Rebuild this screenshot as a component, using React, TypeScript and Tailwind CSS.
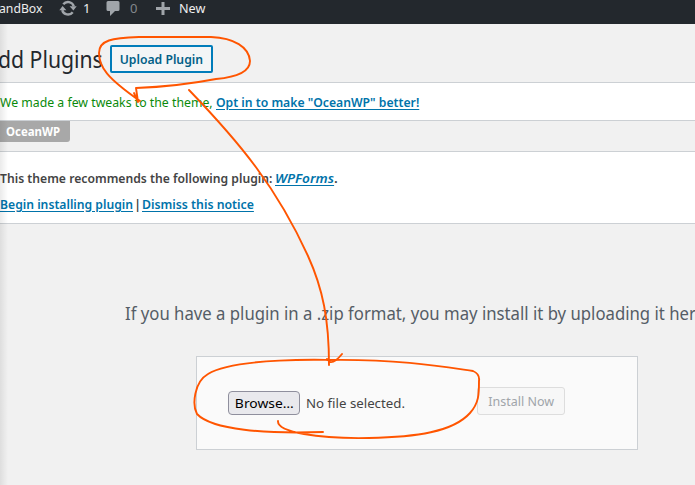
const link = 'font-semibold text-[#0073aa] underline underline-offset-2';
const narrow = 'inline-block origin-left whitespace-nowrap';

function Header() {
  return (
    <header className="flex h-6 items-start bg-[#23282d] text-[13px] leading-[17px] text-[#eeeeee]">
      <span className="w-[59px] origin-left whitespace-nowrap"><span className={narrow + ' -ml-px scale-x-[.94]'}>andBox</span></span>
      <svg className="h-[17px] w-[18px]" viewBox="0 0 18 17" fill="none" stroke="#a0a5aa" strokeWidth="2.4">
        <path d="M4.300 4.300A6 6 0 0 1 14.800 6.300M13.700 12.200A6 6 0 0 1 3.200 10.200" />
        <path d="M17.700 6.200 14.400 10.400 10.600 6.200ZM.3 10.300 3.600 6.100 7.400 10.300Z" fill="#a0a5aa" stroke="none" />
      </svg>
      <span className="ml-[6px] w-[23px]">1</span>
      <svg className="h-[17px] w-[14px]" viewBox="0 0 14 17" fill="#a0a5aa">
        <path d="M2 1h10q1.500 0 1.500 1.500v7Q13.500 11 12 11H9l-5 5v-5H2Q.5 11 .5 9.500v-7Q.5 1 2 1Z" />
      </svg>
      <span className="ml-[10px] w-[26px] text-[#82878c]">0</span>
      <svg className="h-[17px] w-[14px]" viewBox="0 0 14 17" fill="#a0a5aa">
        <path d="M5.500 2h3v5H14v3H8.500v5h-3v-5H0V7h5.500Z" />
      </svg>
      <span className="ml-[9px] origin-left scale-x-[.97]">New</span>
    </header>
  );
}

export default function App() {
  return (
    <div className="relative h-[485px] w-[695px] overflow-hidden bg-[#f1f1f1] font-['Noto_Sans',sans-serif] text-[13px] text-[#444444]">
      <Header />
      <main className="whitespace-nowrap">
        <div className="flex h-[58px] items-start pt-[21px]">
          <h1 className="w-[110px] text-[23px] leading-[28px] text-[#23282d]"><span className={narrow + ' -ml-[2px] scale-x-[.922]'}>dd Plugins</span></h1>
          <button className="h-7 w-[103px] rounded-[2px] border-2 border-[#007cba] bg-[#f3f5f6] text-[13px] leading-6 font-semibold text-[#016087]"><span className="inline-block scale-x-[.938]">Upload Plugin</span></button>
        </div>
        <section className="flex h-[39px] items-center border-y border-[#ccd0d4] bg-white pt-[2px] text-[#0a8a0a]">
          <span className="w-[216px]"><span className={narrow + ' scale-x-[.945]'}>We made a few tweaks to the theme,</span></span>
          <a className={link + ' ' + narrow + ' scale-x-[.938]'}>Opt in to make "OceanWP" better!</a>
        </section>
        <div className="h-[30px]">
          <div className="flex h-[21px] w-[70px] items-center rounded-br-[3px] bg-[#a8a8a8] pl-[6px] text-[12px] font-bold text-white"><span className={narrow + ' scale-x-[.95]'}>OceanWP</span></div>
        </div>
        <section className="h-[73px] border-y border-[#ccd0d4] bg-white pt-4 leading-5 font-semibold">
          <p className="flex">
            <span className="w-[275px]"><span className={narrow + ' scale-x-[.937]'}>This theme recommends the following plugin:</span></span>
            <span className={narrow + ' scale-x-[1.050]'}><a className={link + ' italic'}>WPForms</a>.</span>
          </p>
          <p className="mt-[6px] flex">
            <span className="w-[134px]"><a className={link + ' ' + narrow + ' scale-x-[.937]'}>Begin installing plugin</a></span>
            <span className="w-[8px]">|</span>
            <a className={link + ' ' + narrow + ' scale-x-[.945]'}>Dismiss this notice</a>
          </p>
        </section>
        <div className="mt-[76px] ml-[125px] w-[570px] text-[18px] leading-[27px] text-[#555d66]">
          <p className={narrow + ' scale-x-[.929]'}>If you have a plugin in a .zip format, you may install it by uploading it her</p>
        </div>
        <section className="mt-[29px] ml-[196px] flex h-[94px] w-[442px] items-center border border-[#ccd0d4] bg-[#fafafa]">
          <button className="ml-[31px] h-6 w-[72px] rounded-[4px] border border-[#8f8f9d] bg-[#e9e9ed] pt-px text-[13.330px] text-black"><span className="-mx-1 inline-block scale-x-[1.040]">Browse…</span></button>
          <span className="ml-[6px] w-[171px] pt-px"><span className={narrow + ' scale-x-[1.020]'}>No file selected.</span></span>
          <button className="mb-1 h-7 w-[88px] rounded-[3px] border border-[#dddddd] bg-[#f7f7f7] pt-px text-[#a0a5aa]"><span className="inline-block scale-x-[.96]">Install Now</span></button>
        </section>
      </main>
      <div className="absolute top-6 left-0 h-[461px] w-2 bg-linear-to-r from-black/8 to-transparent" />
      <svg className="absolute inset-0 h-full w-full" viewBox="0 0 695 485" fill="none" stroke="#ff5500" strokeWidth="1.900" strokeLinecap="round" strokeLinejoin="round">
        <path d="M216 79C238 77 250 71 250 61C249 47 234 38 211 37L139 37C112 38 99 40 99 53C99 67 107 78 140 101M138 102L134 93M136 88C164 87 190 84 216 79M136 88L138 102" />
        <path d="M189 90C241 144 277 188 308 256C323 289 329 320 329 365M327 359L330 362C334 363 338 359 342 354" />
        <path d="M323 432C266 434 212 430 197 414C192 405 194 382 208 374C235 357 331 360 329 360C400 359 445 367 473 371Q480 374 479 381C479 394 479 403 470 413C453 432 416 437 369 438C318 439 277 432 278 421" />
      </svg>
    </div>
  );
}
